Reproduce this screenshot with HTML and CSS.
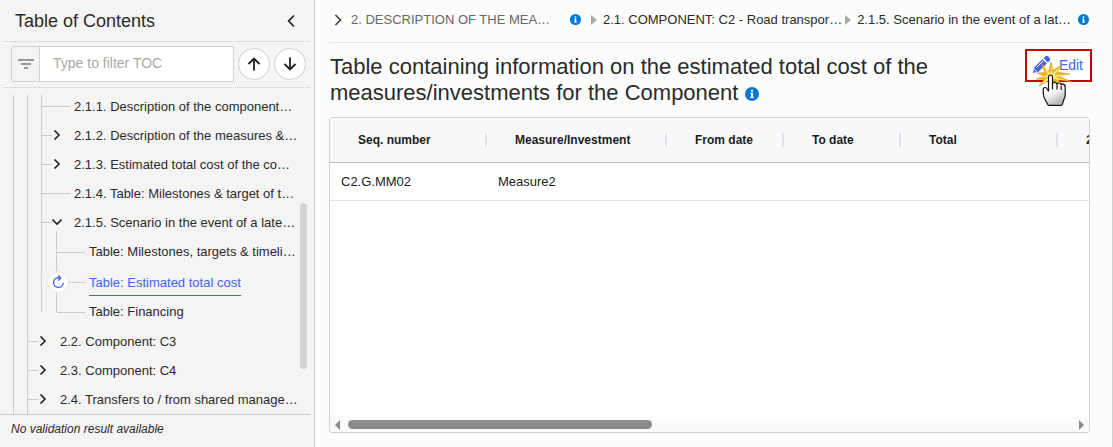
FILE: index.html
```html
<!DOCTYPE html>
<html lang="en">
<head>
<meta charset="utf-8">
<title>Estimated total cost</title>
<link rel="stylesheet" href="styles.css">
</head>
<body>
<svg class="defs" aria-hidden="true">
  <symbol id="chev" viewBox="0 0 10 10"><path d="M2.500 0.500l4.500 4.500-4.500 4.500" fill="none" stroke="currentColor" stroke-width="1.6"/></symbol>
  <symbol id="info" viewBox="0 0 14 14"><circle cx="7" cy="7" r="7" fill="#0078d7"/><path d="M6 2.8h2v2H6zM5.3 5.8H8v4.1h.8V11H5.2V9.900H6V6.900h-.7z" fill="#fff"/></symbol>
</svg>
<aside class="sidebar">
  <header class="side-head">
    <h2 class="side-title">Table of Contents</h2>
    <button class="plain" aria-label="Collapse"><svg class="ic-collapse" viewBox="0 0 8 14"><path d="M7 1.500L1.700 7 7 12.500" fill="none" stroke="#222" stroke-width="1.8"/></svg></button>
  </header>
  <div class="filter">
    <div class="filter-box">
      <label class="filter-label" for="toc-filter" aria-label="Filter"><svg width="16" height="10" viewBox="0 0 16 10"><path d="M0 1h16M3 5h10M6 9h4" stroke="#777" stroke-width="1.6"/></svg></label>
      <input class="filter-input" id="toc-filter" type="text" placeholder="Type to filter TOC">
    </div>
    <button class="round" aria-label="Previous"><svg width="14" height="14" viewBox="0 0 14 14"><path d="M7 13.500V1.500M1.500 7L7 1.500 12.500 7" fill="none" stroke="#222" stroke-width="1.8"/></svg></button>
    <button class="round" aria-label="Next"><svg width="14" height="14" viewBox="0 0 14 14"><path d="M7 .5v12M1.500 7L7 12.500 12.500 7" fill="none" stroke="#222" stroke-width="1.8"/></svg></button>
  </div>
  <nav class="toc">
    <div class="toc-view">
      <ul class="tree root"><li>
        <ul class="tree level2">
          <li>
            <ul class="tree level3">
              <li><div class="row leaf"><a href="#">2.1.1. Description of the component…</a></div></li>
              <li><div class="row"><svg class="chev"><use href="#chev"/></svg><a href="#">2.1.2. Description of the measures &amp;…</a></div></li>
              <li><div class="row"><svg class="chev"><use href="#chev"/></svg><a href="#">2.1.3. Estimated total cost of the co…</a></div></li>
              <li><div class="row leaf"><a href="#">2.1.4. Table: Milestones &amp; target of t…</a></div></li>
              <li><div class="row"><svg class="chev open"><use href="#chev"/></svg><a href="#">2.1.5. Scenario in the event of a late…</a></div>
                <ul class="tree level4">
                  <li><div class="row leaf"><a href="#">Table: Milestones, targets &amp; timeli…</a></div></li>
                  <li><div class="row leaf current"><span class="reload"><svg width="13" height="14" viewBox="0 0 13 14"><path d="M8 2.800H6A4.800 4.800 0 1 0 11.200 7.800M6.200.4L8.700 2.900 6.200 5.400" fill="none" stroke="#4263eb" stroke-width="1.4"/></svg></span><a href="#">Table: Estimated total cost</a></div></li>
                  <li><div class="row leaf"><a href="#">Table: Financing</a></div></li>
                </ul>
              </li>
            </ul>
          </li>
          <li><div class="row"><svg class="chev"><use href="#chev"/></svg><a href="#">2.2. Component: C3</a></div></li>
          <li><div class="row"><svg class="chev"><use href="#chev"/></svg><a href="#">2.3. Component: C4</a></div></li>
          <li><div class="row"><svg class="chev"><use href="#chev"/></svg><a href="#">2.4. Transfers to / from shared manage…</a></div></li>
        </ul>
      </li></ul>
    </div>
    <div class="toc-scroll"><div class="toc-thumb"></div></div>
  </nav>
  <footer class="validation">No validation result available</footer>
</aside>
<main class="main">
  <nav class="crumbs">
    <svg class="crumb-chev" viewBox="0 0 8 12"><path d="M1.500 1l5 5-5 5" fill="none" stroke="#444" stroke-width="1.700"/></svg>
    <a class="crumb muted" href="#">2. DESCRIPTION OF THE MEA…</a>
    <svg class="info small"><use href="#info"/></svg>
    <span class="tri"></span>
    <a class="crumb second" href="#">2.1. COMPONENT: C2 - Road transpor…</a>
    <span class="tri"></span>
    <a class="crumb" href="#">2.1.5. Scenario in the event of a lat…</a>
    <svg class="info small last"><use href="#info"/></svg>
  </nav>
  <header class="page-head">
    <h1 class="page-title">Table containing information on the estimated total cost of the measures/investments for the Component <svg class="info"><use href="#info"/></svg></h1>
    <button class="edit">
      <svg width="19" height="19" viewBox="0 0 19 19"><path d="M1 18l1.200-5.500L10.500 4.200l4.300 4.300-8.300 8.300zM11.600 3.100l1.700-1.700q1.400-1.400 2.800 0l1.500 1.500q1.400 1.400 0 2.800l-1.700 1.700z" fill="#4263eb"/><path d="M4.500 12.500l6.800-6.800M2.300 14l2.700 2.700" stroke="#fff" stroke-width="1"/></svg>
      <span>Edit</span>
      <svg class="pointer" width="38" height="48" viewBox="0 0 38 48" aria-hidden="true">
        <defs><linearGradient id="palm" x1="0" y1="0" x2=".4" y2="1"><stop offset=".6" stop-color="#fff"/><stop offset="1" stop-color="#bbb"/></linearGradient></defs>
        <path d="M5 3l7.500 8.500L15 2l2 8.500L27 4l-6 8.200L34 14l-12 1.800L36 22l-14-2.500L28 26l-10-5-3 4-3-4-9 5 5-6.500L0 19l8-3-7-3 8-.5z" fill="#f0b323" stroke="#c98d10" stroke-width=".5"/>
        <path d="M7 5l7.500 8.500.6-9 1 9L25 6l-6.500 9L32 14.500 19 17l12 3.500L16 19 5 24l7-7-9 1 9-3z" fill="#ffe680"/>
        <path d="M12.500 31V17q0-2 2-2t2 2v7q0-1.500 2-1.500t2.500 2q0-1.500 2-1.500t2.200 2q.3-1 2-.8 2 .3 2 2.800v7q0 3-1.300 5.500l-1.700 5q-.3.800-1.200.8H13q-1 0-1.400-1-.6-1.800-2-3.600Q7.500 37 7.200 33V30q0-2.500 2-2.500 1.400 0 2 1.500z" fill="url(#palm)" stroke="#111" stroke-width="1.200" stroke-linejoin="round"/>
        <path d="M16.500 24v5.500M21 25v4.500M25.200 26v4" stroke="#111" stroke-width="1.200"/>
      </svg>
    </button>
  </header>
  <section class="grid">
    <div class="grid-view">
      <table class="data">
        <colgroup><col class="wide"><col class="wider"><col class="date"><col class="date"><col class="wide"><col class="wide"></colgroup>
        <thead><tr><th><span>Seq. number</span></th><th><span>Measure/Investment</span></th><th><span>From date</span></th><th><span>To date</span></th><th><span>Total</span></th><th><span>2</span></th></tr></thead>
        <tbody><tr><td>C2.G.MM02</td><td>Measure2</td><td></td><td></td><td></td><td></td></tr></tbody>
      </table>
    </div>
    <div class="hscroll"><span class="arrow left"></span><div class="htrack"><div class="hthumb"></div></div><span class="arrow"></span></div>
  </section>
</main>
</body>
</html>
```
FILE: styles.css
```css
* { box-sizing: border-box; }
body {
  margin: 0;
  height: 100vh;
  display: flex;
  font: 13px/16px "Liberation Sans", Arial, sans-serif;
  color: #2b2b2b;
  background: #fcfcfc;
  overflow: hidden;
}
a { color: inherit; text-decoration: none; white-space: nowrap; }
svg { display: block; flex: none; }
button { font: inherit; padding: 0; cursor: pointer; }
.defs { position: absolute; width: 0; height: 0; }

.sidebar {
  flex: 0 0 315px;
  min-width: 0;
  display: flex;
  flex-direction: column;
  padding-right: 4px;
  background: #f4f4f4;
  border-right: 1px solid #ccc;
}
.side-head {
  height: 42px;
  margin-left: 4px;
  padding: 0 15px 0 11px;
  display: flex;
  align-items: center;
  justify-content: space-between;
  border-bottom: 1px dotted #c8c8c8;
}
.side-title { margin: 0; font-size: 18px; line-height: 24px; font-weight: 400; }
.plain { border: 0; background: none; }
.ic-collapse { width: 8px; height: 14px; }
.filter {
  height: 46px;
  margin-left: 4px;
  padding: 0 4px 2px 7px;
  display: flex;
  align-items: center;
  gap: 4px;
  border-bottom: 1px dotted #c8c8c8;
}
.filter-box {
  flex: 1;
  min-width: 0;
  display: flex;
  height: 36px;
  border: 1px solid #d0d0d0;
  border-radius: 3px 0 0 3px;
}
.filter-label {
  flex: none;
  width: 28px;
  display: grid;
  place-items: center;
  border-right: 1px solid #d0d0d0;
}
.filter-input {
  flex: 1;
  min-width: 0;
  border: 0;
  padding: 0 13px 2px;
  background: #fff;
  font: 14px/20px "Liberation Sans", Arial, sans-serif;
}
.filter-input::placeholder { color: #a9a9a9; }
.round {
  flex: none;
  width: 32px;
  height: 32px;
  display: grid;
  place-items: center;
  border: 1px solid #d0d0d0;
  border-radius: 50%;
  background: #fff;
}
.toc { flex: 1; min-height: 0; display: flex; padding-top: 7px; }
.toc-view { flex: 1; min-width: 0; overflow: hidden; }
.tree {
  list-style: none;
  margin: 0;
  padding: 0 0 0 1px;
  background: linear-gradient(#ccc, #ccc) no-repeat 0 0 / 1px 100%;
}
.root { margin: -3px 0 0 13px; }
.level2 { margin-left: 13px; padding-bottom: 8px; }
.level3 { margin-left: 13px; background-size: 1px calc(100% - 15px); }
.level4 { margin: -6px 0 0 14px; padding-top: 6px; background-size: 1px calc(100% - 15px); }
.row { height: 29px; display: flex; align-items: center; }
.level4 .row { height: 30px; }
.row::before { content: ""; flex: none; width: 10px; height: 1px; background: #ccc; }
.row.leaf::before { width: 28px; margin-right: 4px; }
.chev { width: 10px; height: 10px; margin: 0 12px 2px 0; color: #222; }
.chev.open { transform: rotate(90deg); }
.current { position: relative; color: #4263eb; }
.current a { padding-top: 2px; line-height: 24px; border-bottom: 1px solid #4263eb; }
.reload {
  position: absolute;
  left: -10px;
  top: 4px;
  width: 22px;
  height: 22px;
  display: grid;
  place-items: center;
  border: 1px solid #e6e6e6;
  border-radius: 50%;
  background: #fff;
}
.toc-scroll { width: 7px; margin-right: 3px; }
.toc-scroll::before { content: ""; display: block; height: 34%; }
.toc-thumb { height: 52%; border-radius: 4px; background: #d4d4d4; }
.validation {
  height: 33px;
  padding: 6px 11px;
  border-top: 1px solid #ccc;
  font-size: 12px;
  font-style: italic;
}

.main {
  flex: 1;
  min-width: 0;
  display: flex;
  flex-direction: column;
  padding: 0 22px 14px 14px;
  border-right: 1px solid #d0d0d0;
}
.crumbs {
  height: 43px;
  padding: 0 1px 2px 5px;
  display: flex;
  align-items: center;
  border-bottom: 1px solid #e6e6e6;
}
.crumb-chev { width: 8px; height: 12px; margin-right: 9px; }
.crumb.muted { min-width: 208px; color: #666; }
.info { width: 14px; height: 14px; }
.page-title .info { display: inline-block; vertical-align: -1px; }
.small { width: 11px; height: 11px; margin: 0 10px 2px 11px; }
.last { margin: 0 0 2px auto; }
.tri {
  border: 5px solid transparent;
  border-left: 6px solid #a9a9a9;
  border-right: 0;
  margin: 0 6px 0 0;
}
.second { margin-right: 3px; }
.page-head {
  display: flex;
  justify-content: space-between;
  align-items: flex-start;
  padding: 6px 0 11px 1px;
}
.page-title { flex: 0 1 620px; margin: 5px 0 0; font-size: 22px; line-height: 26px; font-weight: 400; }
.edit {
  position: relative;
  width: 67px;
  height: 33px;
  margin-right: -2px;
  padding: 0 7px 2px 5px;
  display: flex;
  align-items: center;
  justify-content: space-between;
  border: 3px solid #c80000;
  background: #fff;
  color: #4263eb;
  font-size: 14px;
}
.edit { border-width: 2px; }
.pointer { position: absolute; left: 9px; top: 9px; }
.grid {
  flex: 1;
  min-height: 0;
  display: flex;
  flex-direction: column;
  border: 1px solid #d0d0d0;
  border-radius: 3px;
  overflow: hidden;
  background: #fff;
}
.grid-view { flex: 1; min-height: 0; overflow: hidden; }
.data { width: 885px; table-layout: fixed; border-collapse: separate; border-spacing: 0; }
.wide { width: 157px; }
.wider { width: 180px; }
.date { width: 117px; }
.data th {
  height: 45px;
  padding: 0 0 0 28px;
  text-align: left;
  font-size: 12px;
  line-height: 14px;
  color: #181d1f;
  background: #f8f8f8;
  border-bottom: 1px solid #babfc7;
}
.data th span { display: block; border-right: 2px solid #dde2eb; }
.data td { height: 38px; padding: 0 11px; color: #181d1f; border-bottom: 1px solid #dde2eb; }
.hscroll { height: 15px; padding: 0 5px; display: flex; align-items: center; gap: 8px; background: #fafafa; }
.htrack { flex: 1; }
.hthumb { width: 42%; height: 9px; border-radius: 5px; background: #8b8b8b; }
.arrow { border: 5px solid transparent; border-left-color: #8b8b8b; border-right: 0; }
.arrow.left { border: 5px solid transparent; border-right-color: #8b8b8b; border-left: 0; }
```
